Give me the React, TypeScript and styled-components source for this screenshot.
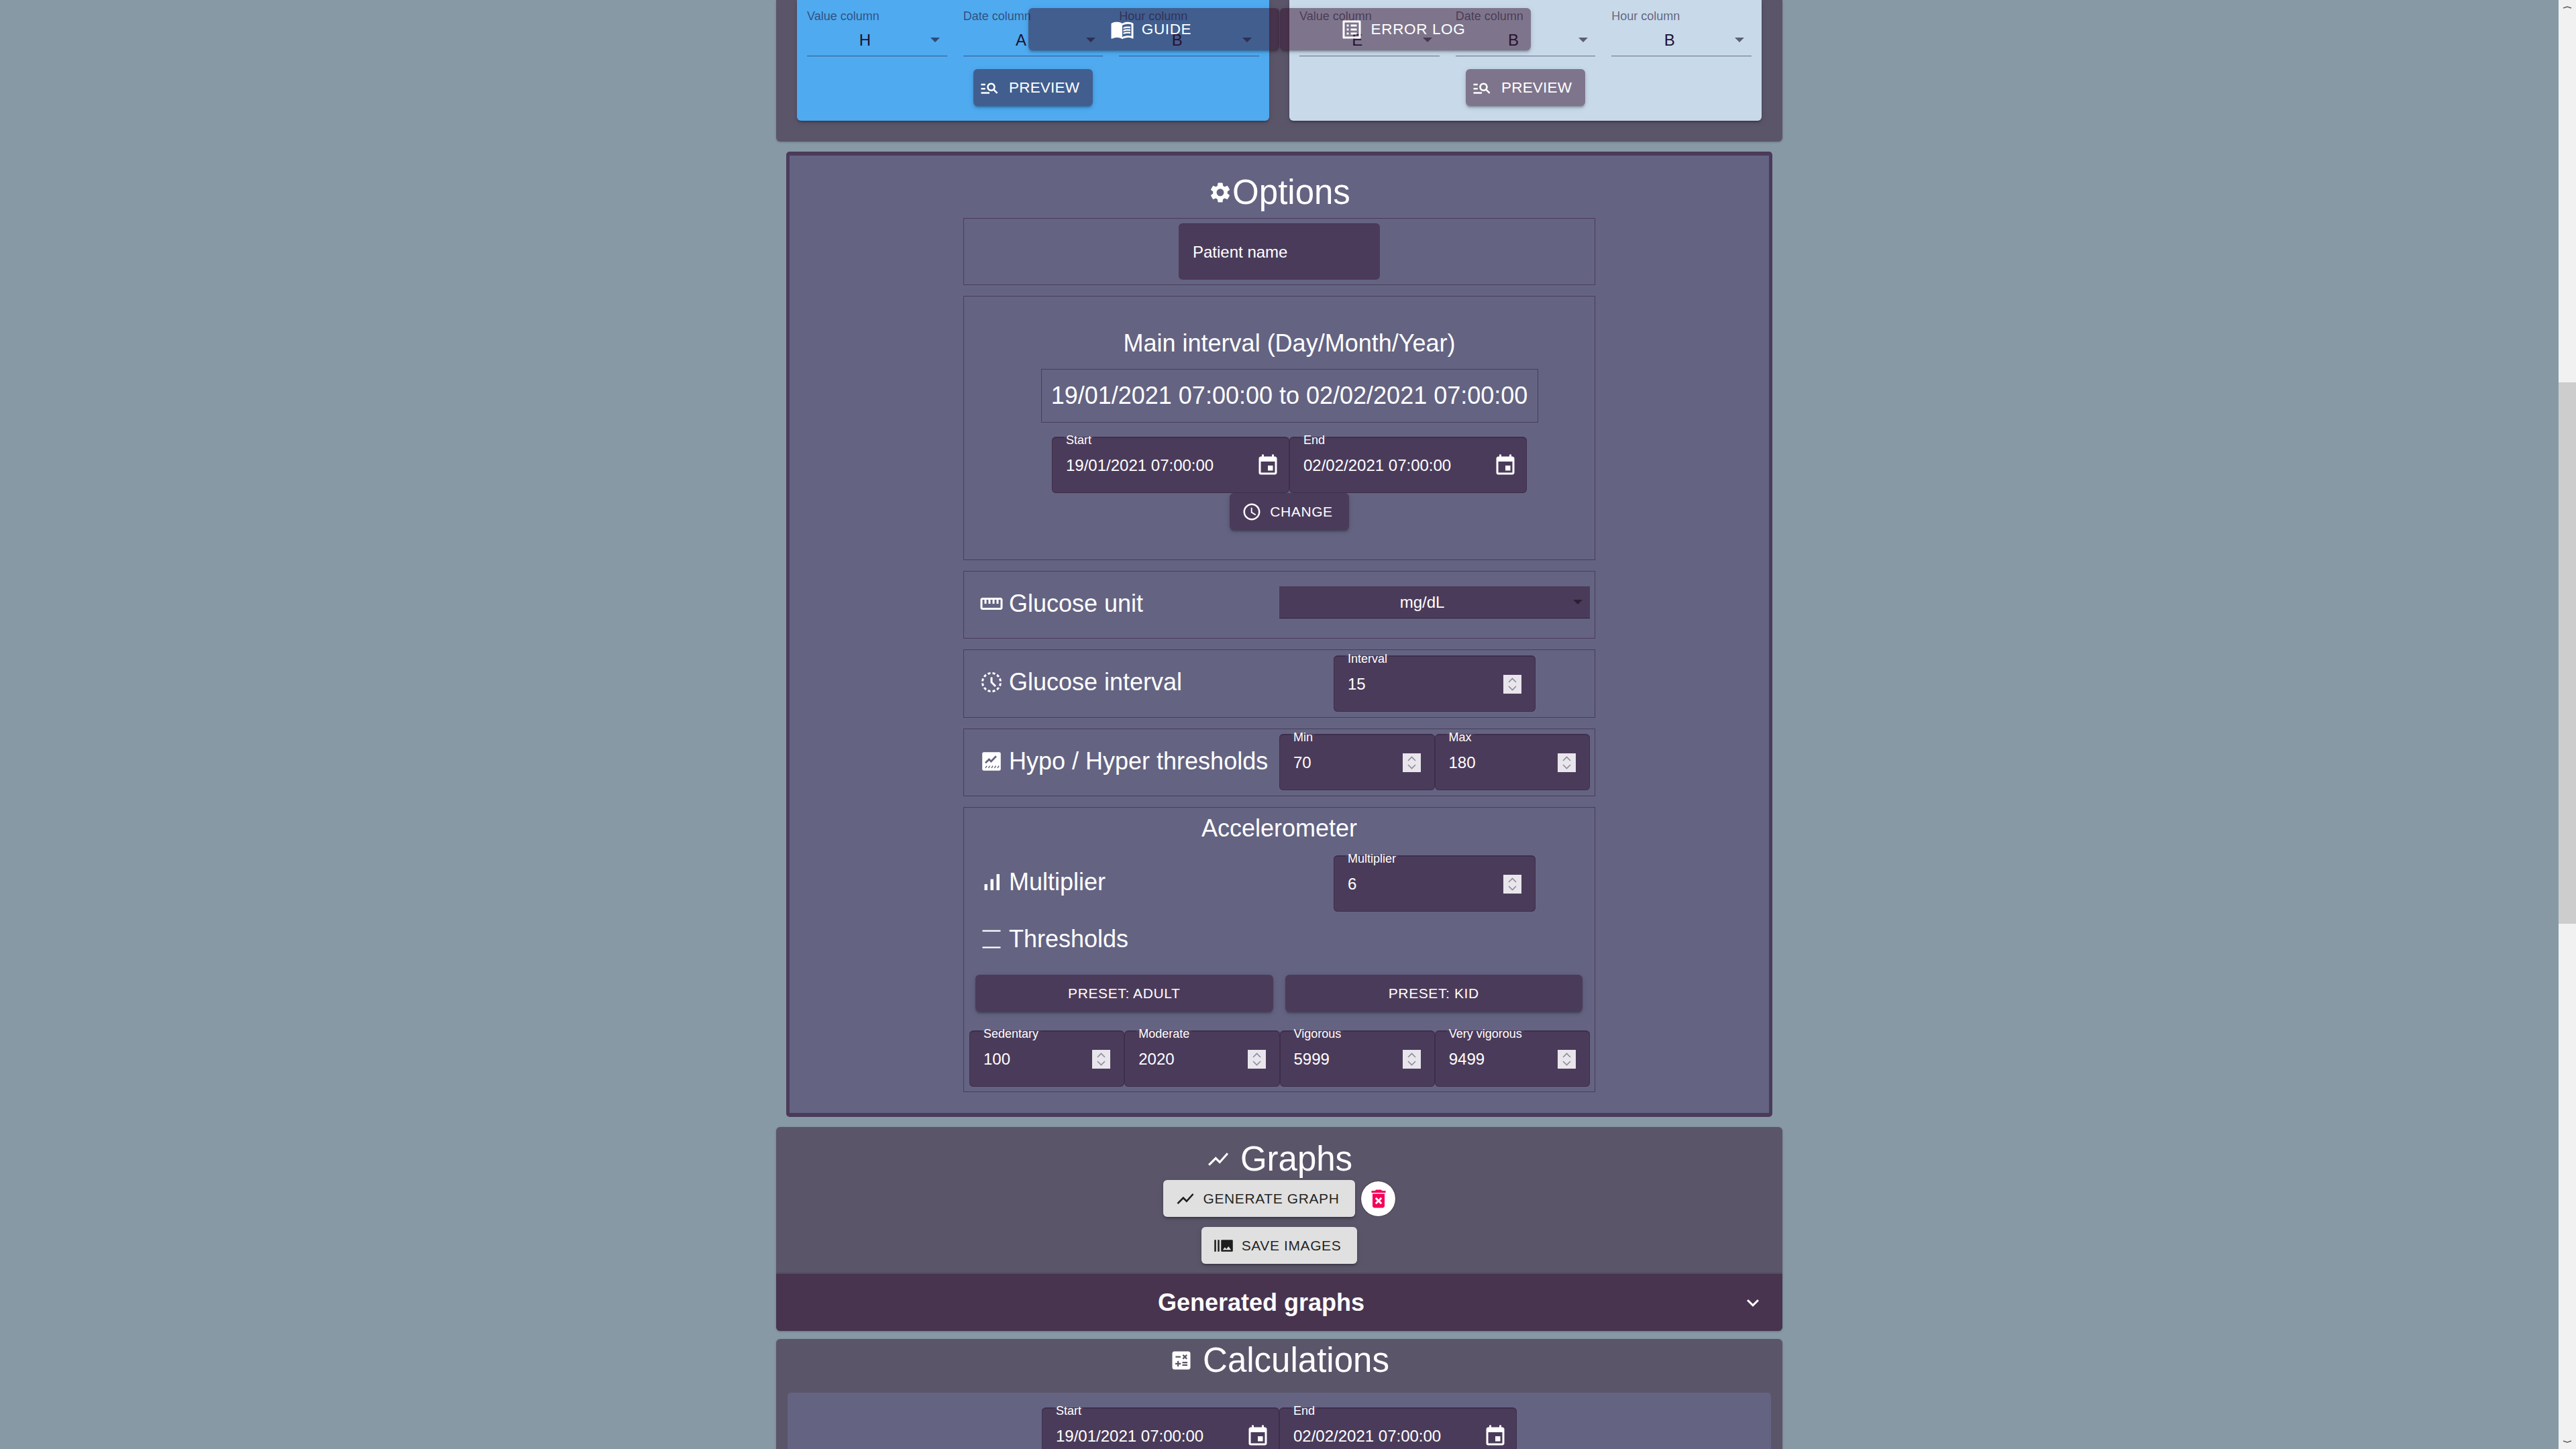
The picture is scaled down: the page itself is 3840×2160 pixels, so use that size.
import React from "react";
import styled, { createGlobalStyle } from "styled-components";
import {
  MdMenuBook, MdOutlineListAlt, MdManageSearch, MdSettings, MdEvent, MdOutlineSchedule,
  MdOutlineStraighten, MdHistoryToggleOff, MdSignalCellularAlt, MdShowChart, MdBurstMode,
  MdDeleteForever, MdCalculate, MdExpandMore,
} from "react-icons/md";

const DARK = "#4b3b5a";
const PANEL = "#646382";
const SECTION = "#5b556a";
const SHADOW = "0 4px 2px -3px rgba(0,0,0,.2), 0 3px 3px 0 rgba(0,0,0,.14), 0 2px 8px 0 rgba(0,0,0,.12)";

const Global = createGlobalStyle`
  html, body { margin: 0; padding: 0; background: #8899a6; overflow: hidden; }
  * { box-sizing: border-box; }
  body { font-family: "Liberation Sans", Arial, sans-serif; color: #fff; }
`;

const Screen = styled.div`
  display: flex;
  width: 3840px;
  height: 2160px;
  overflow: hidden;
  background: #8899a6;
`;
const Page = styled.main`
  position: relative;
  flex: 1;
  display: flex;
  flex-direction: column;
  align-items: center;
`;
const Scrollbar = styled.div`
  width: 26px;
  height: 2160px;
  background: #f1f1f1;
  display: flex;
  flex-direction: column;
`;
const ScrollArrow = styled.svg<{ $end?: boolean }>`
  display: block;
  width: 26px;
  height: 26px;
  flex: none;
  margin-top: ${(p) => (p.$end ? "auto" : "0")};
`;
const ScrollThumb = styled.div`
  margin-top: 544px;
  height: 807px;
  background: #cdcdcd;
`;

const FloatBar = styled.div`
  position: absolute;
  top: 12px;
  left: 0;
  right: 0;
  display: flex;
  justify-content: center;
  gap: 1px;
  z-index: 5;
`;
const FloatButton = styled.div`
  width: 374px;
  height: 63px;
  display: flex;
  align-items: center;
  justify-content: center;
  gap: 11px;
  padding-right: 8px;
  font-size: 22.5px;
  letter-spacing: .64px;
  border-radius: 6px;
  background: rgba(52, 18, 46, .5);
  box-shadow: ${SHADOW};
  svg { width: 36px; height: 36px; flex: none; }
`;

const Section = styled.section`
  width: 1500px;
  background: ${SECTION};
  border-radius: 6px;
  box-shadow: 0 1px 3px rgba(0,0,0,.25);
  flex: none;
`;
const SourcesSection = styled(Section)`
  height: 211px;
  border-radius: 0 0 6px 6px;
  padding: 0 31px;
  display: grid;
  grid-template-columns: 1fr 1fr;
  gap: 30px;
`;
const SourceCard = styled.div<{ $bg: string }>`
  height: 180px;
  background: ${(p) => p.$bg};
  border-radius: 0 0 6px 6px;
  box-shadow: ${SHADOW};
  padding: 12px 15px 0;
  display: flex;
  flex-direction: column;
  align-items: center;
`;
const ColumnGrid = styled.div`
  align-self: stretch;
  display: grid;
  grid-template-columns: repeat(3, 1fr);
  gap: 24px;
`;
const ColumnField = styled.div`
  height: 72px;
  border-bottom: 1.5px solid rgba(30, 20, 50, .55);
  position: relative;
`;
const ColumnLabel = styled.div`
  font-size: 18px;
  line-height: 24px;
  color: rgba(30, 20, 50, .62);
`;
const ColumnValue = styled.div`
  font-size: 24px;
  line-height: 48px;
  text-align: center;
  padding-right: 36px;
  color: #1d1230;
`;
const ColumnArrow = styled.span`
  position: absolute;
  right: 11px;
  top: 44px;
  width: 0;
  height: 0;
  border-left: 7.5px solid transparent;
  border-right: 7.5px solid transparent;
  border-top: 7.5px solid rgba(20, 15, 35, .6);
`;
const PreviewButton = styled.div`
  margin-top: 19px;
  width: 178px;
  height: 55px;
  display: flex;
  align-items: center;
  padding-left: 9px;
  gap: 14px;
  font-size: 22.5px;
  letter-spacing: .2px;
  border-radius: 6px;
  background: rgba(52, 18, 46, .5);
  box-shadow: ${SHADOW};
  svg { width: 30px; height: 30px; flex: none; }
`;

const OptionsPanel = styled.section`
  flex: none;
  width: 1470px;
  margin-top: 15px;
  height: 1439px;
  background: ${PANEL};
  border: solid ${DARK};
  border-width: 6px 5px;
  border-radius: 5px;
  padding-top: 25px;
  display: flex;
  flex-direction: column;
  align-items: center;
`;
const SectionTitle = styled.h2<{ $gap?: number }>`
  margin: 0;
  font-size: 51px;
  line-height: 60px;
  height: 60px;
  font-weight: 400;
  display: flex;
  align-items: center;
  justify-content: center;
  gap: ${(p) => p.$gap ?? 0}px;
  svg { width: 36px; height: 36px; flex: none; }
`;
const OptionsStack = styled.div`
  margin-top: 8px;
  width: 942px;
  display: flex;
  flex-direction: column;
  gap: 16px;
`;
const OptionBox = styled.div`
  border: 1px solid ${DARK};
`;
const PatientBox = styled(OptionBox)`
  height: 100px;
  display: flex;
  align-items: center;
  justify-content: center;
`;
const PatientInput = styled.div`
  width: 300px;
  height: 84px;
  background: ${DARK};
  border-radius: 6px;
  border-top: 1.5px solid #3f304e;
  padding: 0 21px;
  display: flex;
  align-items: center;
  font-size: 24px;
`;
const IntervalBox = styled(OptionBox)`
  height: 394px;
  padding: 49px 0 0 30px;
  display: flex;
  flex-direction: column;
  align-items: center;
`;
const BoxHeading = styled.h3`
  margin: 0;
  font-size: 36px;
  line-height: 42px;
  font-weight: 400;
  text-align: center;
`;
const IntervalText = styled.div`
  margin-top: 17px;
  width: 741px;
  height: 80px;
  border: 1px solid ${DARK};
  display: flex;
  align-items: center;
  justify-content: center;
  font-size: 36px;
`;
const FieldPair = styled.div<{ $width: number; $top: number }>`
  margin-top: ${(p) => p.$top}px;
  width: ${(p) => p.$width}px;
  display: grid;
  grid-template-columns: 1fr 1fr;
`;
const Field = styled.div`
  position: relative;
  height: 84px;
  background: ${DARK};
  border-radius: 6px;
  border-top: 1.5px solid #3f304e;
  box-shadow: inset 0 0 0 1px rgba(50, 38, 62, .55);
  display: flex;
  align-items: center;
  justify-content: space-between;
  padding: 0 21px;
  font-size: 24px;
`;
const FieldLabel = styled.span`
  position: absolute;
  left: 18px;
  top: -7px;
  padding: 0 3px;
  font-size: 18px;
  line-height: 22px;
  background: linear-gradient(to bottom, ${PANEL} 0 6px, ${DARK} 6px);
`;
const DateIcon = styled(MdEvent)`
  width: 36px;
  height: 36px;
  flex: none;
  margin-right: -7px;
`;
const Spinner = styled.svg`
  display: block;
  width: 27px;
  height: 28px;
  flex: none;
`;
const RaisedButton = styled.div<{ $light?: boolean }>`
  display: inline-flex;
  align-items: center;
  justify-content: center;
  height: 55px;
  flex: none;
  font-size: 21px;
  letter-spacing: .6px;
  border-radius: 6px;
  background: ${(p) => (p.$light ? "#e0e0e0" : DARK)};
  color: ${(p) => (p.$light ? "rgba(0,0,0,.87)" : "#fff")};
  box-shadow: ${SHADOW};
  svg { width: 30px; height: 30px; flex: none; margin-right: 12px; }
`;
const IconButton = styled(RaisedButton)`
  padding: 0 24px 0 18px;
`;
const Row = styled(OptionBox)<{ $height: number; $top: number }>`
  height: ${(p) => p.$height}px;
  padding: 0 7px 0 23px;
  display: flex;
  justify-content: space-between;
  align-items: flex-start;
  > :last-child { margin-top: ${(p) => p.$top}px; }
`;
const RowLabel = styled.div`
  display: flex;
  align-items: center;
  gap: 8px;
  margin-top: 27px;
  height: 42px;
  font-size: 36px;
  white-space: nowrap;
  svg { width: 36px; height: 36px; flex: none; }
`;
const RowControl = styled.div`
  width: 463px;
  display: flex;
  justify-content: center;
`;
const SingleField = styled(Field)`
  width: 301px;
`;
const FieldHalves = styled.div`
  width: 463px;
  display: grid;
  grid-template-columns: 1fr 1fr;
`;
const UnitSelect = styled.div`
  position: relative;
  width: 463px;
  height: 48px;
  background: ${DARK};
  border-bottom: 1.5px solid #2d2238;
  font-size: 24px;
  line-height: 48px;
  text-align: center;
  padding-right: 37px;
  &::after {
    content: "";
    position: absolute;
    right: 11px;
    top: 20px;
    border-left: 7.5px solid transparent;
    border-right: 7.5px solid transparent;
    border-top: 7.5px solid #2a2034;
  }
`;
const AccelBox = styled(OptionBox)`
  height: 425px;
  padding-top: 10px;
  display: flex;
  flex-direction: column;
`;
const AccelRow = styled.div`
  margin-top: 19px;
  padding-left: 23px;
  padding-right: 7px;
  display: flex;
  justify-content: space-between;
  align-items: flex-start;
`;
const AccelLabel = styled(RowLabel)`
  margin-top: 19px;
`;
const ThresholdLabel = styled(RowLabel)`
  margin: 20px 0 0 23px;
`;
const PresetGrid = styled.div`
  margin: 32px 18px 0 17px;
  display: grid;
  grid-template-columns: 1fr 1fr;
  gap: 18px;
`;
const PresetButton = styled(RaisedButton)`
  display: flex;
`;
const ThresholdGrid = styled.div`
  margin: 28px 7px 0 8px;
  display: grid;
  grid-template-columns: repeat(4, 1fr);
`;

const GraphSection = styled(Section)`
  margin-top: 15px;
  padding-top: 18px;
  display: flex;
  flex-direction: column;
  align-items: center;
`;
const GenerateRow = styled.div`
  margin-top: 1px;
  display: flex;
  align-items: center;
  gap: 9px;
`;
const DeleteButton = styled.div`
  width: 51px;
  height: 52px;
  border-radius: 50%;
  background: #fff;
  box-shadow: 0 0 1.5px #000;
  color: #f50057;
  display: flex;
  align-items: center;
  justify-content: center;
  svg { width: 36px; height: 36px; }
`;
const SaveButton = styled(IconButton)`
  margin-top: 15px;
`;
const AccordionHeader = styled.div`
  margin-top: 15px;
  align-self: stretch;
  height: 85px;
  background: #48344f;
  border-radius: 0 0 6px 6px;
  border-top: 0;
  box-shadow: 0 -2px 0 #524a60;
  padding: 0 26px 0 8px;
  display: flex;
  align-items: center;
  svg { width: 36px; height: 36px; flex: none; }
`;
const AccordionTitle = styled.div`
  flex: 1;
  text-align: center;
  font-size: 36px;
  font-weight: 700;
`;
const CalcSection = styled(Section)`
  margin-top: 12px;
  padding: 2px 17px 0;
  height: 300px;
  flex: none;
`;
const CalcInner = styled.div`
  margin-top: 18px;
  height: 220px;
  background: ${PANEL};
  border-radius: 5px 5px 0 0;
  padding-top: 22px;
  display: flex;
  justify-content: center;
`;

const Stepper = () => (
  <Spinner viewBox="0 0 27 28">
    <rect width="27" height="28" fill="#e8e6ec" />
    <path d="M8 11 L13.5 5.5 L19 11 M8 17 L13.5 22.5 L19 17" fill="none" stroke="#8f8b9b" strokeWidth="1.6" />
  </Spinner>
);

const NumberField = ({ label, value }: { label: string; value: string }) => (
  <Field>
    <FieldLabel>{label}</FieldLabel>
    <span>{value}</span>
    <Stepper />
  </Field>
);
const WideNumberField = ({ label, value }: { label: string; value: string }) => (
  <SingleField>
    <FieldLabel>{label}</FieldLabel>
    <span>{value}</span>
    <Stepper />
  </SingleField>
);
const DateField = ({ label, value }: { label: string; value: string }) => (
  <Field>
    <FieldLabel>{label}</FieldLabel>
    <span>{value}</span>
    <DateIcon />
  </Field>
);

const HypoIcon = () => (
  <svg viewBox="0 0 24 24">
    <rect x="2.8" y="2.8" width="18.4" height="18.4" rx="1.6" fill="#fff" />
    <path d="M6 13.5 L9.6 10 L11.6 12 L16.6 6.8" fill="none" stroke={PANEL} strokeWidth="1.8" />
    <path d="M6 18.6 L7.4 16.4 M9 18.6 L10.4 16.4 M12 18.6 L13.4 16.4 M15 18.6 L16.4 16.4 M18 18.6 L19.4 16.4" stroke={PANEL} strokeWidth="1" />
  </svg>
);
const ThresholdIcon = () => (
  <svg viewBox="0 0 24 24">
    <path d="M3 3.7 H21 M3 20.3 H21" stroke="#fff" strokeWidth="1.5" />
  </svg>
);

const ColumnSet = ({ values }: { values: string[] }) => {
  const names = ["Value column", "Date column", "Hour column"];
  return (
    <ColumnGrid>
      {names.map((n, i) => (
        <ColumnField key={n}>
          <ColumnLabel>{n}</ColumnLabel>
          <ColumnValue>{values[i]}</ColumnValue>
          <ColumnArrow />
        </ColumnField>
      ))}
    </ColumnGrid>
  );
};

export default function App() {
  return (
    <Screen>
      <Global />
      <Page>
        <FloatBar>
          <FloatButton><MdMenuBook />GUIDE</FloatButton>
          <FloatButton><MdOutlineListAlt />ERROR LOG</FloatButton>
        </FloatBar>

        <SourcesSection>
          <SourceCard $bg="#4faaf0">
            <ColumnSet values={["H", "A", "B"]} />
            <PreviewButton><MdManageSearch />PREVIEW</PreviewButton>
          </SourceCard>
          <SourceCard $bg="#c8d9ea">
            <ColumnSet values={["E", "B", "B"]} />
            <PreviewButton><MdManageSearch />PREVIEW</PreviewButton>
          </SourceCard>
        </SourcesSection>

        <OptionsPanel>
          <SectionTitle><MdSettings />Options</SectionTitle>
          <OptionsStack>
            <PatientBox><PatientInput>Patient name</PatientInput></PatientBox>

            <IntervalBox>
              <BoxHeading>Main interval (Day/Month/Year)</BoxHeading>
              <IntervalText>19/01/2021 07:00:00 to 02/02/2021 07:00:00</IntervalText>
              <FieldPair $width={708} $top={21}>
                <DateField label="Start" value="19/01/2021 07:00:00" />
                <DateField label="End" value="02/02/2021 07:00:00" />
              </FieldPair>
              <IconButton><MdOutlineSchedule />CHANGE</IconButton>
            </IntervalBox>

            <Row $height={101} $top={22}>
              <RowLabel><MdOutlineStraighten />Glucose unit</RowLabel>
              <UnitSelect>mg/dL</UnitSelect>
            </Row>

            <Row $height={102} $top={8}>
              <RowLabel><MdHistoryToggleOff />Glucose interval</RowLabel>
              <RowControl><WideNumberField label="Interval" value="15" /></RowControl>
            </Row>

            <Row $height={101} $top={7}>
              <RowLabel><HypoIcon />Hypo / Hyper thresholds</RowLabel>
              <FieldHalves>
                <NumberField label="Min" value="70" />
                <NumberField label="Max" value="180" />
              </FieldHalves>
            </Row>

            <AccelBox>
              <BoxHeading>Accelerometer</BoxHeading>
              <AccelRow>
                <AccelLabel><MdSignalCellularAlt />Multiplier</AccelLabel>
                <RowControl><WideNumberField label="Multiplier" value="6" /></RowControl>
              </AccelRow>
              <ThresholdLabel><ThresholdIcon />Thresholds</ThresholdLabel>
              <PresetGrid>
                <PresetButton>PRESET: ADULT</PresetButton>
                <PresetButton>PRESET: KID</PresetButton>
              </PresetGrid>
              <ThresholdGrid>
                <NumberField label="Sedentary" value="100" />
                <NumberField label="Moderate" value="2020" />
                <NumberField label="Vigorous" value="5999" />
                <NumberField label="Very vigorous" value="9499" />
              </ThresholdGrid>
            </AccelBox>
          </OptionsStack>
        </OptionsPanel>

        <GraphSection>
          <SectionTitle $gap={15}><MdShowChart />Graphs</SectionTitle>
          <GenerateRow>
            <IconButton $light><MdShowChart />GENERATE GRAPH</IconButton>
            <DeleteButton><MdDeleteForever /></DeleteButton>
          </GenerateRow>
          <SaveButton $light><MdBurstMode />SAVE IMAGES</SaveButton>
          <AccordionHeader>
            <AccordionTitle>Generated graphs</AccordionTitle>
            <MdExpandMore />
          </AccordionHeader>
        </GraphSection>

        <CalcSection>
          <SectionTitle $gap={14}><MdCalculate />Calculations</SectionTitle>
          <CalcInner>
            <FieldPair $width={708} $top={0}>
              <DateField label="Start" value="19/01/2021 07:00:00" />
              <DateField label="End" value="02/02/2021 07:00:00" />
            </FieldPair>
          </CalcInner>
        </CalcSection>
      </Page>

      <Scrollbar>
        <ScrollArrow viewBox="0 0 26 26">
          <path d="M7 12 L13 10 L19 12" fill="none" stroke="#606060" strokeWidth="1.5" />
        </ScrollArrow>
        <ScrollThumb />
        <ScrollArrow $end viewBox="0 0 26 26">
          <path d="M7 14 L13 16 L19 14" fill="none" stroke="#606060" strokeWidth="1.5" />
        </ScrollArrow>
      </Scrollbar>
    </Screen>
  );
}
